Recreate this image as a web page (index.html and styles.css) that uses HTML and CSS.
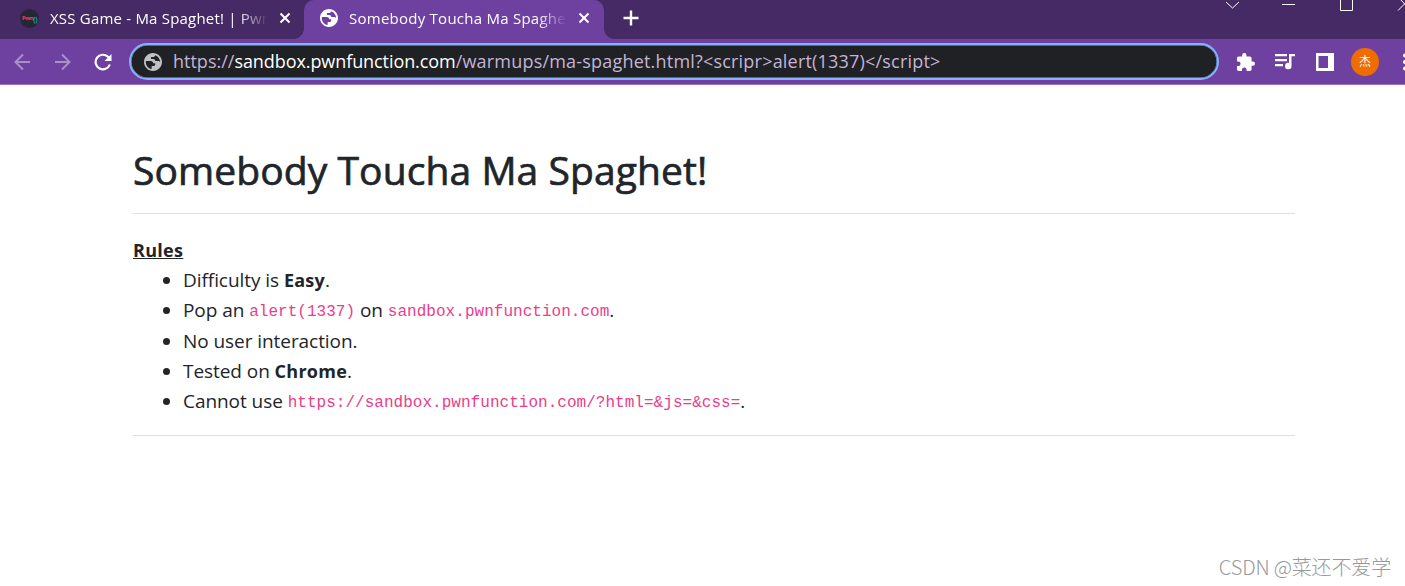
FILE: index.html
```html
<!DOCTYPE html>
<html lang="en">
<head>
  <meta charset="UTF-8">
  <meta name="viewport" content="width=device-width, initial-scale=1.0">
  <title>Somebody Toucha Ma Spaghet!</title>
  <link rel="stylesheet" href="styles.css">
</head>
<body>

  <svg class="defs" width="0" height="0">
    <symbol id="globe" viewBox="2 2 20 20">
      <path d="M12 2C6.480 2 2 6.480 2 12s4.480 10 10 10 10-4.480 10-10S17.520 2 12 2zm-1.500 17.800C6.700 19.300 4 16 4 12c0-.4 0-.8.1-1.200h5.400c1.700 0 2.700 1 2.700 2.600h2.300v1.500c0 .9-.6 1.500-1.500 1.500h-2.500zM20 12.500c-.5-.9-1.200-1.500-2.300-1.500h-3.200c0-1.500-.8-2.300-2.300-2.300H9.800V6.500h2.400c1.200 0 2-.8 2-2 3.400 1 5.800 4.200 5.800 8z"/>
    </symbol>
    <symbol id="close" viewBox="0 0 12 12">
      <path d="M1.500 1.500l9 9m0-9l-9 9" fill="none" stroke="currentColor" stroke-width="2"/>
    </symbol>
  </svg>

  <div class="tabs">
    <div class="tab">
      <span class="favicon"><b>Pwn</b><i>()</i></span>
      <span class="tab-title first">XSS Game - Ma Spaghet! | Pwr</span>
      <svg class="close" width="12" height="12"><use href="#close"/></svg>
    </div>
    <div class="tab active">
      <svg class="globe" width="18" height="18"><use href="#globe"/></svg>
      <span class="tab-title second">Somebody Toucha Ma Spaghe</span>
      <svg class="close" width="12" height="12"><use href="#close"/></svg>
    </div>
    <svg class="new-tab" width="16" height="16" viewBox="0 0 16 16"><path d="M8 .5v15M.5 8h15" stroke="#fff" stroke-width="2.400"/></svg>
    <svg class="window" width="180" height="14" viewBox="0 0 180 14" fill="none" stroke="#fff">
      <path d="M1 2l6.500 6L14 2M57 4.500h13M115.500-2v12.500h12V-2M173 10.500L187-3.500M173-3l13 13.500"/>
    </svg>
  </div>

  <div class="toolbar">
    <svg class="nav" width="16" height="18" viewBox="0 0 16 18"><path d="M16 9H1.500M9 1.500L1.500 9 9 16.500"/></svg>
    <svg class="nav forward" width="16" height="18" viewBox="0 0 16 18"><path d="M0 9h14.500M7 1.500L14.500 9 7 16.500"/></svg>
    <svg class="reload" width="18" height="18" viewBox="0 0 18 18"><path d="M15.800 11.500A7.300 7.300 0 1 1 14 3.800L15.500 5.300" fill="none" stroke="#fff" stroke-width="2.200"/><path d="M17.500 1v7h-7z" fill="#fff"/></svg>
    <div class="address">
      <svg width="18" height="18"><use href="#globe"/></svg>
      <span class="url"><span class="scheme">https://</span><span class="host">sandbox.pwnfunction.com</span><span class="path">/warmups/ma-spaghet.html?&lt;scripr&gt;alert(1337)&lt;/script&gt;</span></span>
    </div>
    <svg class="puzzle" width="18" height="18" viewBox="2 1 21 21" fill="#fff"><path d="M20.500 11H19V7c0-1.100-.9-2-2-2h-4V3.500a2.500 2.500 0 0 0-5 0V5H4c-1.100 0-2 .9-2 2v3.800h1.500a2.700 2.700 0 0 1 0 5.400H2V20c0 1.100.9 2 2 2h3.800v-1.500a2.700 2.700 0 0 1 5.400 0V22H17c1.100 0 2-.9 2-2v-4h1.500a2.500 2.500 0 0 0 0-5z"/></svg>
    <svg class="queue" width="20" height="17" viewBox="0 0 20 17" fill="#fff"><path d="M0 1h12v2.200H0zM0 6h12v2.200H0zM0 11h8v2.200H0zM14 1h6v2.200h-3.500V13a3.200 3.200 0 1 1-2.500-3z"/></svg>
    <svg class="side" width="18" height="18" viewBox="0 0 18 18"><path d="M0 0h18v18H0zM2.500 3v12H12V3z" fill="#fff" fill-rule="evenodd"/></svg>
    <span class="avatar">杰</span>
    <svg class="more" width="4" height="18" viewBox="0 0 4 18" fill="#fff"><circle cx="2" cy="2.500" r="2"/><circle cx="2" cy="9" r="2"/><circle cx="2" cy="15.500" r="2"/></svg>
  </div>

  <div class="container">
    <h1>Somebody Toucha Ma Spaghet!</h1>
    <hr>
    <div class="rules"><u>Rules</u></div>
    <ul>
      <li>Difficulty is <b>Easy</b>.</li>
      <li>Pop an <code>alert(1337)</code> on <code>sandbox.pwnfunction.com</code>.</li>
      <li>No user interaction.</li>
      <li>Tested on <b>Chrome</b>.</li>
      <li>Cannot use <code>https://sandbox.pwnfunction.com/?html=&amp;js=&amp;css=</code>.</li>
    </ul>
    <hr>
  </div>

  <div class="watermark">CSDN @菜还不爱学</div>

</body>
</html>
```

FILE: styles.css
```css
body {
  margin: 0;
  height: 586px;
  overflow: hidden;
  position: relative;
  background: #fff;
  color: #212529;
  font-family: "Open Sans", "Noto Sans CJK SC", sans-serif;
}
.defs {
  position: absolute;
}
svg, .favicon, .avatar {
  flex: none;
}

/* Browser tabs */
.tabs {
  display: flex;
  height: 39px;
  background: #462a65;
  color: #fff;
}
.tab {
  display: flex;
  align-items: center;
  box-sizing: border-box;
  width: 304px;
  height: 39px;
  padding: 0 13px 3px 20px;
  background: #462a65;
}
.tab.active {
  width: 300px;
  padding: 0 14px 3px 16px;
  background: #6e40a0;
  border-radius: 10px 10px 0 0;
  position: relative;
}
/* The feet of the active tab curve out into the toolbar */
.tab.active::before,
.tab.active::after {
  content: "";
  position: absolute;
  bottom: 0;
  width: 10px;
  height: 10px;
}
.tab.active::before {
  left: -10px;
  background: radial-gradient(circle at 0 0, #462a65 9.5px, #6e40a0 10px);
}
.tab.active::after {
  right: -10px;
  background: radial-gradient(circle at 100% 0, #462a65 9.5px, #6e40a0 10px);
}
.favicon {
  display: flex;
  align-items: center;
  justify-content: center;
  width: 19px;
  height: 19px;
  border-radius: 50%;
  background: #272635;
  font-size: 8px;
  letter-spacing: -0.5px;
}
.favicon b {
  color: #ef3d60;
  font-size: 6px;
}
.favicon i {
  color: #23c3c8;
  font-style: normal;
}
.globe {
  fill: #fff;
}
.tab-title {
  flex: 1;
  margin-left: 11px;
  margin-right: 11px;
  overflow: hidden;
  white-space: nowrap;
  font-size: 15px;
  line-height: 24px;
  -webkit-mask-image: linear-gradient(to right, #000 86%, transparent);
  mask-image: linear-gradient(to right, #000 86%, transparent);
}
.tab .close {
  color: #fff;
}
.first {
  letter-spacing: 0.2px;
}
.second {
  letter-spacing: 0.25px;
}
.new-tab {
  margin: 10px 0 0 19px;
}
.window {
  margin-left: auto;
}

/* Toolbar */
.toolbar {
  display: flex;
  align-items: center;
  box-sizing: border-box;
  height: 46px;
  padding-left: 14px;
  border-bottom: 1px solid #9678b9;
  background: #6e40a0;
  overflow: hidden;
}
.nav {
  fill: none;
  stroke: #ab8fc9;
  stroke-width: 2;
}
.forward {
  margin-left: 25px;
}
.reload {
  margin-left: 23px;
}
.address {
  display: flex;
  align-items: center;
  flex: none;
  box-sizing: border-box;
  width: 1090px;
  height: 37px;
  margin-left: 17px;
  padding-left: 13px;
  border: 2px solid #85b1fb;
  border-radius: 19px;
  box-shadow: inset 0 0 0 0.5px #85b1fb;
  background: #202124;
  fill: #c0c1c4;
}
.url {
  margin-left: 11px;
  padding-bottom: 1px;
  white-space: nowrap;
  font-size: 18px;
  line-height: 28px;
  color: #c3b4d8;
}
.host {
  color: #fff;
  letter-spacing: -0.08px;
}
.path {
  letter-spacing: 0.2px;
}
.puzzle {
  margin-left: 18px;
}
.queue {
  margin-left: 20px;
}
.side {
  margin-left: 21px;
}
.avatar {
  width: 28px;
  height: 28px;
  margin-left: 17px;
  border-radius: 50%;
  background: #ef6c00;
  color: #fff;
  font-size: 12px;
  line-height: 27px;
  text-align: center;
}
.more {
  margin-left: 24px;
}

/* Page */
.container {
  width: 1162px;
  margin-left: 133px;
  padding-top: 59px;
}
h1 {
  margin: 0;
  font-size: 39px;
  font-weight: 500;
  line-height: 52px;
  letter-spacing: 0.09px;
  -webkit-text-stroke: 0.7px #212529;
}
hr {
  height: 1px;
  margin: 17px 0 21px;
  border: 0;
  background: #e0e0e0;
}
.rules {
  font-size: 18px;
  font-weight: 700;
  line-height: 30px;
  letter-spacing: 0.3px;
}
ul {
  margin: 0 0 19px;
  padding-left: 50px;
  font-size: 19px;
  line-height: 30.250px;
  letter-spacing: -0.06px;
}
li {
  height: 30.250px;
}
li b {
  font-size: 18px;
  letter-spacing: 0.25px;
}
code {
  color: #e83e8c;
  font-family: "Liberation Mono", monospace;
  font-size: 16px;
  letter-spacing: 0.03px;
  position: relative;
  top: -1px;
}
.watermark {
  position: absolute;
  right: 14px;
  bottom: 4px;
  color: #999;
  font-family: "Noto Sans CJK SC", sans-serif;
  font-size: 20px;
  font-weight: 300;
  line-height: 30px;
  letter-spacing: -0.15px;
}
```
